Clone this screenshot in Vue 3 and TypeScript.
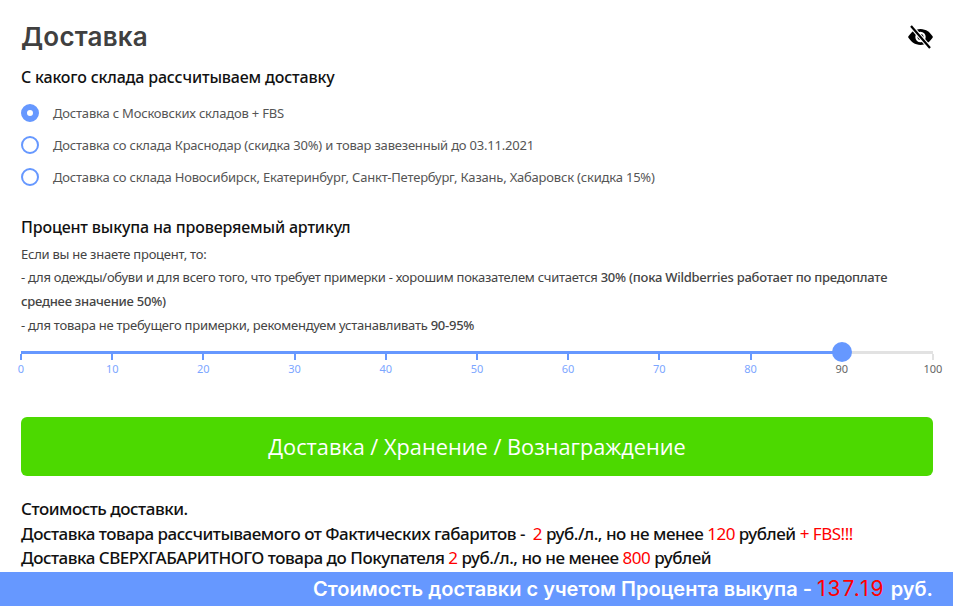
<template>
  <div class="page">
    <div class="head">
      <h1>Доставка</h1>
      <svg class="eye" viewBox="0 0 25 24" width="25" height="24" aria-hidden="true">
        <path d="M12.500 4C7 4 2.500 7.600 0 12c2.500 4.400 7 8 12.500 8S22.500 16.400 25 12c-2.500-4.400-7-8-12.500-8z" fill="#000" />
        <circle cx="12.500" cy="12" r="5.200" fill="#fff" />
        <circle cx="12.500" cy="12" r="3" fill="#000" />
        <path d="M3 1l19 22" stroke="#fff" stroke-width="4.400" />
        <path d="M3 1l19 22" stroke="#000" stroke-width="2.200" />
      </svg>
    </div>
    <h2>С какого склада рассчитываем доставку</h2>
    <div class="radios">
      <label v-for="(o, i) in options" :key="o" class="radio">
        <span class="dot" :class="{ on: i === 0 }" />
        <span>{{ o }}</span>
      </label>
    </div>

    <h2 class="second">Процент выкупа на проверяемый артикул</h2>
    <div class="note">
      <p class="lead">Если вы не знаете процент, то:</p>
      <p>- для одежды/обуви и для всего того, что требует примерки - хорошим показателем считается <b>30% (пока Wildberries работает по предоплате</b><br /><b>среднее значение 50%)</b></p>
      <p>- для товара не требущего примерки, рекомендуем устанавливать <b>90-95%</b></p>
    </div>

    <div class="slider">
      <div class="track">
        <div class="fill" :style="{ width: value + '%' }" />
        <div class="handle" :style="{ left: value + '%' }" />
      </div>
      <div class="ticks">
        <div v-for="t in ticks" :key="t" class="tick" :class="{ off: t > value, cur: t === value }">
          <i />
          <span>{{ t }}</span>
        </div>
      </div>
    </div>

    <button class="tabs">Доставка / Хранение / Вознаграждение</button>

    <div class="cost">
      <p>Стоимость доставки.</p>
      <p>Доставка товара рассчитываемого от Фактических габаритов - &nbsp;<em>2</em> руб./л., но не менее <em>120</em> рублей <em>+ FBS!!!</em></p>
      <p>Доставка СВЕРХГАБАРИТНОГО товара до Покупателя <em>2</em> руб./л., но не менее <em>800</em> рублей</p>
    </div>

    <div class="total">Стоимость доставки с учетом Процента выкупа - <em>137.19</em> руб.</div>
  </div>
</template>

<script setup lang="ts">
const options = [
  'Доставка с Московских складов + FBS',
  'Доставка со склада Краснодар (скидка 30%) и товар завезенный до 03.11.2021',
  'Доставка со склада Новосибирск, Екатеринбург, Санкт-Петербург, Казань, Хабаровск (скидка 15%)',
]
const ticks = [0, 10, 20, 30, 40, 50, 60, 70, 80, 90, 100]
const value = 90
</script>

<style>
html,
body {
  margin: 0;
  background: #fff;
}
</style>

<style scoped>
.page {
  height: 606px;
  box-sizing: border-box;
  padding-top: 20px;
  font-family: "Noto Sans", "Open Sans", sans-serif;
  color: #4a4a4a;
  overflow: hidden;
}
.head {
  display: flex;
  justify-content: space-between;
  align-items: center;
  padding: 0 20px 0 21px;
  height: 34px;
}
h1 {
  margin: 0;
  font: 600 26px/34px Inter, "Open Sans", sans-serif;
  letter-spacing: 0.2px;
  color: #404040;
}
.eye {
  display: block;
}
h2 {
  margin: 12px 21px 0;
  font: 500 16px/22px "Noto Sans", sans-serif;
  letter-spacing: -0.16px;
  color: #111;
}
.radios {
  margin: 14px 21px 0;
  display: flex;
  flex-direction: column;
  gap: 10px;
}
.radio {
  display: flex;
  align-items: center;
  gap: 14px;
  height: 22px;
  font-size: 13px;
  letter-spacing: -0.2px;
  color: #555;
}
.dot {
  width: 18px;
  height: 18px;
  box-sizing: border-box;
  border: 2px solid #6698ff;
  border-radius: 50%;
  flex: none;
}
.dot.on {
  border-width: 6px;
}
.second {
  margin-top: 28px;
}
.note {
  margin: 5px 21px 0;
  font-size: 13px;
  line-height: 24px;
  letter-spacing: -0.25px;
  color: #444;
}
.note p {
  margin: 0;
}
.note .lead {
  line-height: 22px;
}
.note b {
  font-weight: 500;
}
.slider {
  margin: 14px 20px 0 21px;
}
.track {
  position: relative;
  height: 3px;
  background: #e2e2e2;
}
.fill {
  height: 100%;
  background: #6698ff;
}
.fill::after {
  content: "";
  display: block;
  height: 1px;
  background: repeating-linear-gradient(90deg, #6698ff 0 2px, transparent 2px 3px);
}
.handle {
  position: absolute;
  top: -9px;
  width: 20px;
  height: 20px;
  margin-left: -10px;
  border-radius: 50%;
  background: #6698ff;
}
.ticks {
  display: flex;
  justify-content: space-between;
}
.tick {
  width: 0;
  display: flex;
  flex-direction: column;
  align-items: center;
  font: 11px/14px "Noto Sans", sans-serif;
  color: #7ca6ff;
}
.tick i {
  width: 2px;
  height: 6px;
  flex: none;
  background: #6698ff;
}
.tick span {
  margin-top: 2px;
}
.tick.off i {
  background: #e2e2e2;
}
.tick.off span,
.tick.cur span {
  color: #666;
}
.tabs {
  display: block;
  width: 912px;
  height: 59px;
  margin: 41px 0 0 21px;
  border: 0;
  border-radius: 6px;
  background: #4cd900;
  color: #fff;
  font: 400 21.75px "Open Sans", sans-serif;
}
.cost {
  margin: 21px 21px 0;
  padding-bottom: 1px;
  font-size: 17px;
  font-weight: 500;
  line-height: 24.700px;
  letter-spacing: -0.48px;
  color: #111;
}
.cost p {
  margin: 0;
  white-space: nowrap;
}
em {
  font-style: normal;
  font-weight: 400;
  color: #f00;
}
.total {
  height: 34px;
  padding-right: 20px;
  background: #6698ff;
  color: #fff;
  text-align: right;
  font: 600 20px/34px Inter, "Open Sans", sans-serif;
}
.total em {
  font-size: 21px;
  letter-spacing: 2px;
}
</style>
